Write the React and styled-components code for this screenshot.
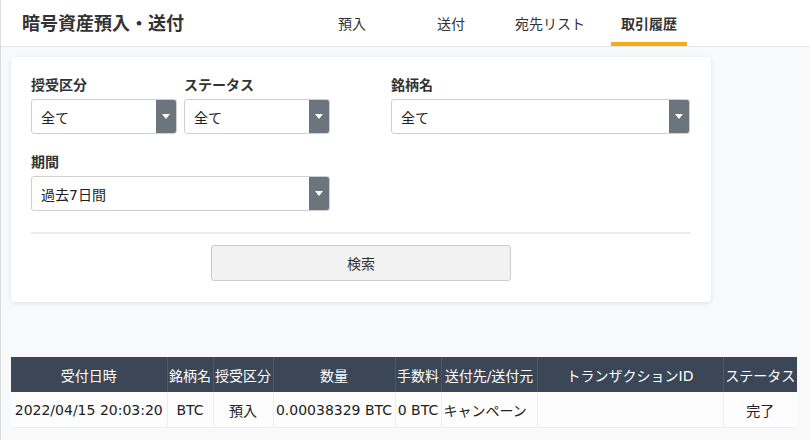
import React from 'react';
import styled, { createGlobalStyle } from 'styled-components';

const GlobalStyle = createGlobalStyle`
  html, body {
    margin: 0;
    padding: 0;
    background: #f8f9fa;
    font-family: "DejaVu Sans", "Noto Sans CJK JP", sans-serif;
    color: #333;
  }
`;

const Page = styled.div`
  min-height: 440px;
  border-left: 1px solid #dcdcdc;
  box-sizing: border-box;
`;

const Header = styled.header`
  height: 46px;
  background: #fff;
  border-bottom: 1px solid #e6e6e6;
  display: grid;
  grid-template-columns: 292px 1fr;
  padding-left: 21px;
  align-items: stretch;
`;

const Title = styled.h1`
  margin: 0;
  font-size: 18px;
  font-weight: bold;
  color: #333;
  align-self: center;
  padding-bottom: 3px;
  white-space: nowrap;
`;

const Nav = styled.nav`
  display: flex;
  gap: 23px;
`;

const Tab = styled.div`
  width: 76px;
  display: flex;
  align-items: center;
  justify-content: center;
  font-size: 14px;
  font-weight: ${(p) => (p.$active ? 'bold' : 'normal')};
  color: #333;
  box-sizing: border-box;
  border-bottom: 4px solid ${(p) => (p.$active ? '#f5ac1c' : 'transparent')};
  padding-top: 4px;
  white-space: nowrap;
`;

const Card = styled.section`
  margin: 10px 0 0 10px;
  width: 700px;
  background: #fff;
  border-radius: 4px;
  box-shadow: 0 1px 4px rgba(0, 0, 0, 0.1);
  padding: 18px 20px 21px;
  box-sizing: border-box;
`;

const FormRow = styled.div`
  display: flex;
  margin-bottom: ${(p) => (p.$last ? 0 : 18)}px;
`;

const Field = styled.div`
  width: ${(p) => p.$w}px;
  margin-left: ${(p) => p.$ml || 0}px;
`;

const Label = styled.div`
  font-size: 14px;
  font-weight: bold;
  line-height: 20px;
  margin-bottom: 4px;
  white-space: nowrap;
`;

const Select = styled.div`
  height: 35px;
  border: 1px solid #cfcfcf;
  border-radius: 3px;
  box-sizing: border-box;
  display: flex;
  align-items: stretch;
  overflow: hidden;
  background: #fff;
`;

const SelectValue = styled.div`
  flex: 1;
  display: flex;
  align-items: center;
  padding-left: 9px;
  font-size: 14px;
  color: #222;
`;

const Arrow = styled.div`
  width: 20px;
  background: #6c757d;
  display: flex;
  align-items: center;
  justify-content: center;
  &::after {
    content: '';
    border-left: 4px solid transparent;
    border-right: 4px solid transparent;
    border-top: 5px solid #fff;
  }
`;

const Divider = styled.hr`
  border: 0;
  border-top: 2px solid #ececec;
  margin: 21px 0 11px;
`;

const ButtonRow = styled.div`
  display: flex;
  justify-content: center;
`;

const SearchButton = styled.button`
  width: 300px;
  height: 36px;
  background: #f2f2f2;
  border: 1px solid #cccccc;
  border-radius: 3px;
  font-family: inherit;
  font-size: 14px;
  color: #333;
`;

const TableWrap = styled.div`
  margin: 55px 0 0 10px;
  width: 786px;
`;

const Table = styled.table`
  width: 100%;
  border-collapse: collapse;
  table-layout: fixed;
  font-size: 14px;
`;

const Th = styled.th`
  height: 35px;
  background: #3b4656;
  color: #fff;
  font-weight: normal;
  padding: 0;
  border-left: 1px solid #4d5868;
  white-space: nowrap;
  overflow: hidden;
  &:first-child {
    border-left: 0;
  }
`;

const Td = styled.td`
  height: 35px;
  background: #fdfdfd;
  color: #222;
  text-align: ${(p) => p.$align || 'center'};
  padding: 0 ${(p) => (p.$align === 'left' ? '2px' : '0')};
  border-left: 1px solid #eeeeee;
  border-bottom: 1px solid #eeeeee;
  white-space: nowrap;
  overflow: hidden;
  &:first-child {
    border-left: 0;
  }
`;

const columns = [
  { label: '受付日時', w: 156 },
  { label: '銘柄名', w: 46 },
  { label: '授受区分', w: 60 },
  { label: '数量', w: 122 },
  { label: '手数料', w: 46 },
  { label: '送付先/送付元', w: 96 },
  { label: 'トランザクションID', w: 186 },
  { label: 'ステータス', w: 74 },
];

const SelectBox = ({ value }) => (
  <Select>
    <SelectValue>{value}</SelectValue>
    <Arrow />
  </Select>
);

const App = () => {
  return (
    <Page>
      <GlobalStyle />
      <Header>
        <Title>暗号資産預入・送付</Title>
        <Nav>
          <Tab>預入</Tab>
          <Tab>送付</Tab>
          <Tab>宛先リスト</Tab>
          <Tab $active>取引履歴</Tab>
        </Nav>
      </Header>
      <Card>
        <FormRow>
          <Field $w={146}>
            <Label>授受区分</Label>
            <SelectBox value="全て" />
          </Field>
          <Field $w={146} $ml={7}>
            <Label>ステータス</Label>
            <SelectBox value="全て" />
          </Field>
          <Field $w={299} $ml={61}>
            <Label>銘柄名</Label>
            <SelectBox value="全て" />
          </Field>
        </FormRow>
        <FormRow $last>
          <Field $w={299}>
            <Label>期間</Label>
            <SelectBox value="過去7日間" />
          </Field>
        </FormRow>
        <Divider />
        <ButtonRow>
          <SearchButton>検索</SearchButton>
        </ButtonRow>
      </Card>
      <TableWrap>
        <Table>
          <colgroup>
            {columns.map((c) => (
              <col key={c.label} style={{ width: c.w }} />
            ))}
          </colgroup>
          <thead>
            <tr>
              {columns.map((c) => (
                <Th key={c.label}>{c.label}</Th>
              ))}
            </tr>
          </thead>
          <tbody>
            <tr>
              <Td>2022/04/15 20:03:20</Td>
              <Td>BTC</Td>
              <Td>預入</Td>
              <Td>0.00038329 BTC</Td>
              <Td>0 BTC</Td>
              <Td $align="left">キャンペーン</Td>
              <Td></Td>
              <Td>完了</Td>
            </tr>
          </tbody>
        </Table>
      </TableWrap>
    </Page>
  );
};

export default App;
